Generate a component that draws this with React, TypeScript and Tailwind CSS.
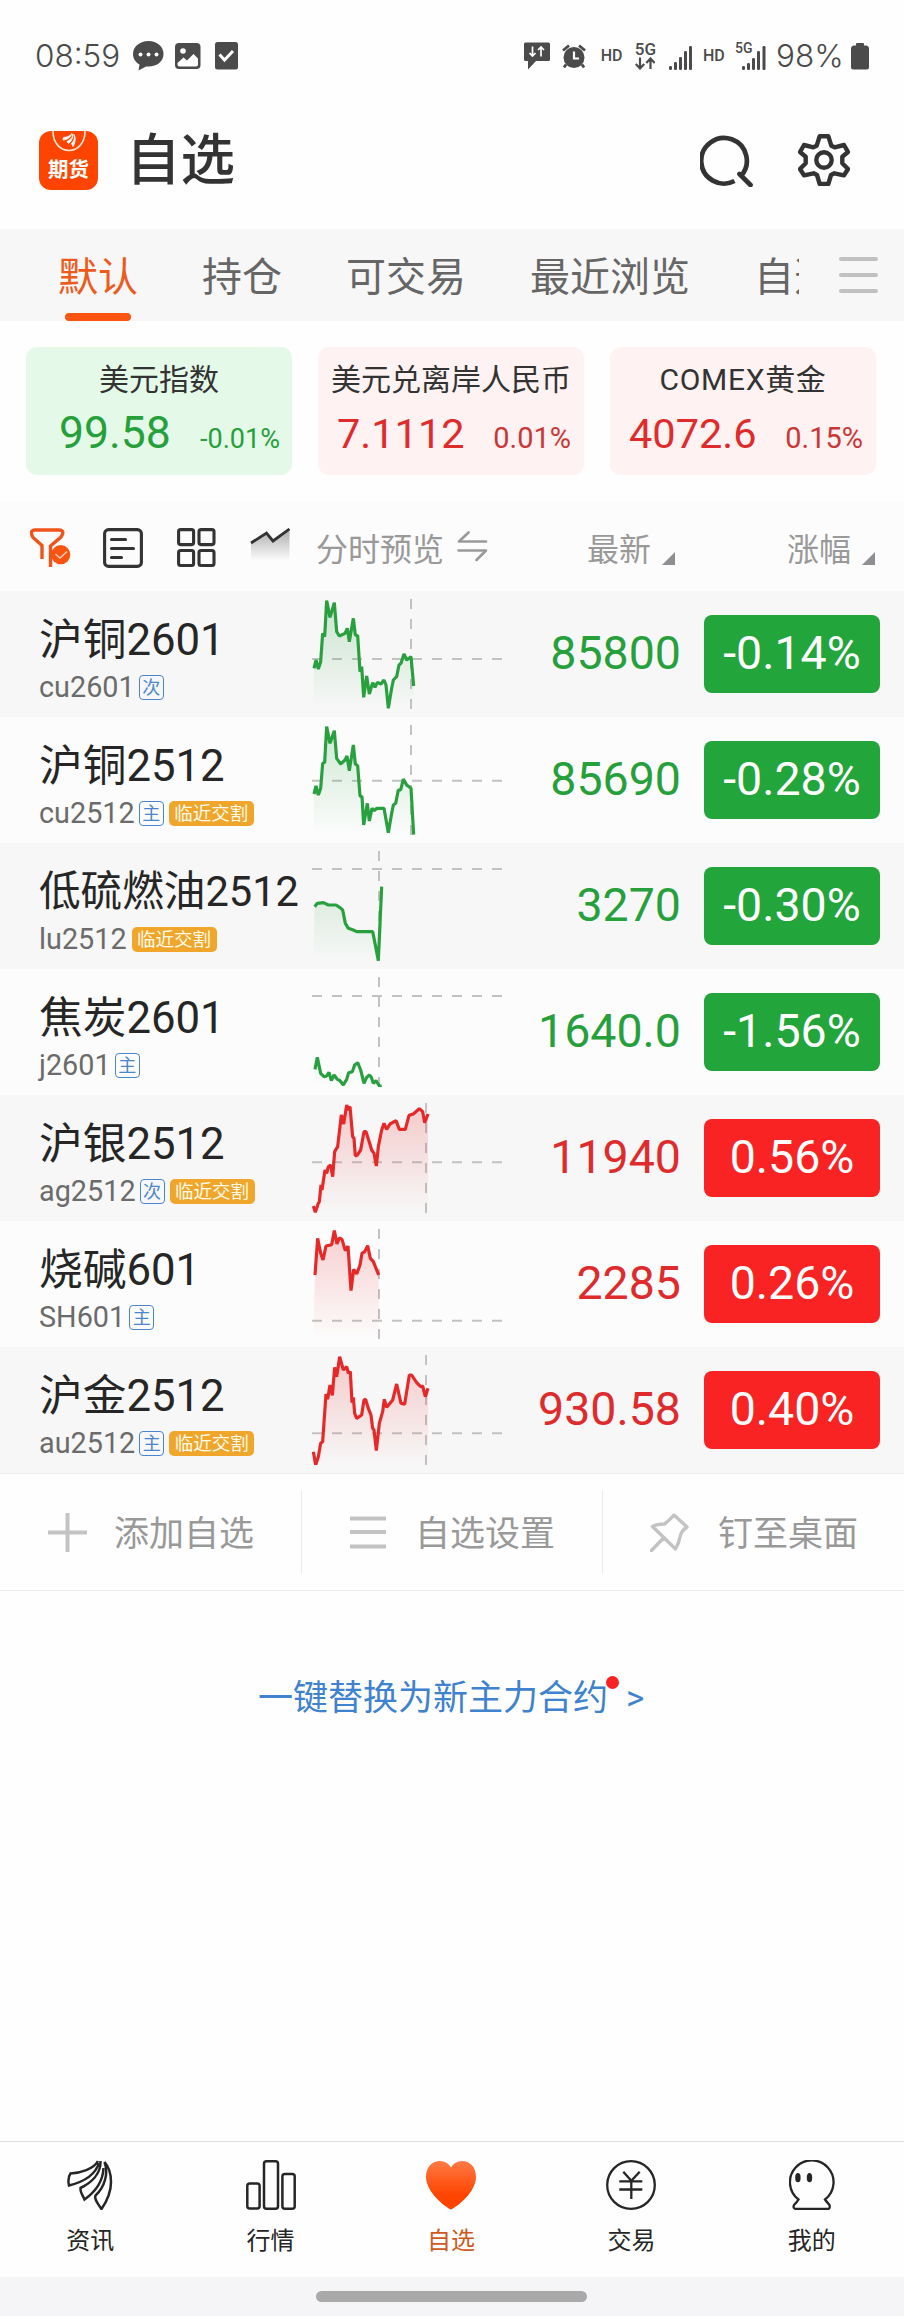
import React from 'react';

type Trend = 'up' | 'down';

interface Quote {
  name: string;
  code: string;
  tag?: string;
  expiring?: boolean;
  price: string;
  change: string;
  trend: Trend;
  baseY: number;
  nowX: number;
  points: string;
  tight?: boolean;
}

const QUOTES: Quote[] = [
  {
    name: '沪铜2601', code: 'cu2601', tag: '次', price: '85800', change: '-0.14%', trend: 'down', baseY: 180, nowX: 297,
    points: '6,208 12,183 19,210 26,188 32,103 38,113 44,5 54,55 67,11 74,98 82,111 99,103 106,88 112,128 124,58 130,108 137,110 144,218 149,203 155,295 164,231 172,285 182,251 189,265 196,250 207,255 216,243 222,258 229,328 239,268 244,243 254,233 261,198 267,193 276,165 284,183 297,173 305,261',
  },
  {
    name: '沪铜2512', code: 'cu2512', tag: '主', expiring: true, price: '85690', change: '-0.28%', trend: 'down', baseY: 167, nowX: 297,
    points: '6,207 12,183 19,210 26,190 32,115 38,112 44,5 54,55 67,17 74,100 86,117 99,105 105,93 112,137 124,60 130,117 137,122 144,213 150,215 155,300 166,235 172,288 180,250 187,257 194,250 216,250 229,323 239,265 244,240 251,235 259,195 266,195 274,162 284,180 297,190 305,329',
  },
  {
    name: '低硫燃油2512', code: 'lu2512', expiring: true, price: '3270', change: '-0.30%', trend: 'down', baseY: 54, nowX: 201, tight: true,
    points: '8,167 16,157 34,155 49,162 72,162 84,170 92,177 100,217 109,232 124,237 134,242 182,242 189,277 199,329 209,107',
  },
  {
    name: '焦炭2601', code: 'j2601', tag: '主', price: '1640.0', change: '-1.56%', trend: 'down', baseY: 57, nowX: 201,
    points: '9,277 16,241 26,289 36,299 44,297 51,286 58,311 66,294 76,307 84,311 94,324 104,307 110,287 121,284 128,264 137,257 146,279 156,319 164,301 172,294 178,301 184,319 192,311 202,327 209,327',
  },
  {
    name: '沪银2512', code: 'ag2512', tag: '次', expiring: true, price: '11940', change: '0.56%', trend: 'up', baseY: 178, nowX: 342,
    points: '4,309 10,328 19,301 22,296 27,246 30,261 39,201 44,211 49,191 56,186 62,221 68,146 77,131 88,36 95,63 104,6 108,21 114,11 122,101 126,106 130,159 136,156 146,141 156,86 162,86 170,111 179,141 186,151 193,189 199,131 209,81 216,61 224,79 234,63 252,53 262,79 280,79 291,37 304,33 322,17 332,26 338,59 348,33',
  },
  {
    name: '烧碱601', code: 'SH601', tag: '主', price: '2285', change: '0.26%', trend: 'up', baseY: 275, nowX: 201,
    points: '9,138 17,28 26,73 33,93 42,51 59,47 67,5 75,45 82,27 90,31 100,65 108,51 117,185 125,121 134,135 144,108 150,73 158,68 167,50 175,88 184,98 200,138',
  },
  {
    name: '沪金2512', code: 'au2512', tag: '主', expiring: true, price: '930.58', change: '0.40%', trend: 'up', baseY: 235, nowX: 342,
    points: '4,290 11,330 19,305 26,265 32,260 42,117 47,133 54,90 61,121 68,37 74,65 83,5 94,45 104,35 109,55 115,50 120,143 124,127 128,175 134,190 149,180 156,135 161,133 169,160 177,180 182,220 186,225 193,287 202,205 212,170 217,133 224,157 242,135 254,87 267,145 278,148 292,60 299,60 314,83 326,95 332,93 340,125 348,100',
  },
];

const SignalBars: React.FC<{ className?: string }> = ({ className }) => (
  <svg className={className} width="24" height="24" viewBox="0 0 24 24" fill="#4b4b4b">
    <rect x="0" y="20" width="3" height="4" rx="1.2" />
    <rect x="5" y="16" width="3" height="8" rx="1.2" />
    <rect x="10" y="11" width="3" height="13" rx="1.2" />
    <rect x="15" y="5" width="3" height="19" rx="1.2" />
    <rect x="20" y="0" width="3" height="24" rx="1.2" />
  </svg>
);

const StatusBar = () => (
  <div className="flex h-[112px] items-center pl-[35px] pr-[35px] text-[#4b4b4b]">
    <span className="w-[98px] font-['Inter',sans-serif] text-[31.5px] leading-none font-light">08:59</span>
    <svg width="31" height="30" viewBox="0 0 31 30">
      <path d="M15.5 0C7 0 0 5.5 0 13C0 18 3 21.5 6.500 23.5L5.500 29.500L13 25.500C23.500 26.500 30.500 20.500 30.500 13C30.500 5.500 24 0 15.500 0Z" fill="#4b4b4b" />
      <circle cx="7.5" cy="13.5" r="2" fill="#fff" />
      <circle cx="15.5" cy="13.5" r="2" fill="#fff" />
      <circle cx="23.5" cy="13.5" r="2" fill="#fff" />
    </svg>
    <svg className="ml-[11px]" width="26" height="26" viewBox="0 0 26 26">
      <rect width="25.5" height="26" rx="4" fill="#4b4b4b" />
      <circle cx="8" cy="8" r="2.8" fill="#fff" />
      <path d="M2.5 20L8.5 14.5L12 17.5L18.5 11L23 15.5V21.5Q23 23.5 21 23.5H4.5Q2.5 23.5 2.5 21.5Z" fill="#fff" />
    </svg>
    <svg className="ml-[14px]" width="23" height="28" viewBox="0 0 23 28">
      <rect width="23" height="27.5" rx="2.5" fill="#4b4b4b" />
      <path d="M4.5 12.5L9.5 18L18 9" fill="none" stroke="#fff" strokeWidth="3" />
    </svg>

    <svg className="ml-auto" width="26" height="28" viewBox="0 0 26 28">
      <path d="M1.5 0.5H24.5Q26 0.5 26 2V17.5Q26 19 24.5 19H12L4 27.5V19H1.5Q0 19 0 17.5V2Q0 0.5 1.5 0.5Z" fill="#4b4b4b" />
      <path d="M8.5 4.5V14M5.5 11l3 3 3-3M17 14.5V5M14 8l3-3 3 3" fill="none" stroke="#fff" strokeWidth="1.7" />
    </svg>
    <svg className="ml-[12px]" width="24" height="25" viewBox="0 0 24 25">
      <path d="M1 6.5L7 1.5M23 6.5L17 1.5M4 20.5L2 23.5M20 20.5L22 23.5" stroke="#4b4b4b" strokeWidth="2.8" />
      <circle cx="12" cy="13.5" r="10.5" fill="#4b4b4b" />
      <path d="M12 7.5V14.5H17" fill="none" stroke="#fff" strokeWidth="2.2" />
    </svg>
    <span className="ml-[15px] w-[22px] text-[16px] leading-none font-medium">HD</span>
    <div className="ml-[12px] flex flex-col items-center">
      <span className="text-[17px] leading-[14px] font-medium">5G</span>
      <svg className="mt-px" width="20" height="13" viewBox="0 0 20 13" fill="none" stroke="#4b4b4b" strokeWidth="2.2">
        <path d="M5 0.5V11M0.8 7l4.2 4.5L9.2 7M15.5 12V1.500M11.300 6l4.200-4.500L19.700 6" />
      </svg>
    </div>
    <SignalBars className="ml-[13px] mt-[3px]" />
    <span className="ml-[10px] w-[22px] text-[16px] leading-none font-medium">HD</span>
    <div className="relative ml-[10px] h-[28px] w-[31px]">
      <span className="absolute left-0 top-0 text-[14px] leading-[12px] font-medium">5G</span>
      <svg className="absolute bottom-0 right-0" width="24" height="24" viewBox="0 0 24 24" fill="#4b4b4b">
        <rect x="0" y="20" width="3" height="4" rx="1.2" />
        <rect x="5" y="17" width="3" height="7" rx="1.2" />
        <rect x="10" y="12" width="3" height="12" rx="1.2" />
        <rect x="15" y="5" width="3" height="19" rx="1.2" />
        <rect x="20.5" y="0" width="3" height="24" rx="1.2" />
      </svg>
    </div>
    <span className="ml-[10px] w-[70px] font-['Inter',sans-serif] text-[31.5px] leading-none font-light">98%</span>
    <svg className="ml-[5px]" width="18" height="27" viewBox="0 0 18 27" fill="#4b4b4b">
      <path d="M5 1Q5 0 6 0H12Q13 0 13 1V2.5H15.5Q18 3 18 5.5V24Q18 26.5 15.5 26.5H2.5Q0 26.5 0 24V5.5Q0 3 2.5 2.5H5Z" />
    </svg>
  </div>
);

const AppHeader = () => (
  <header className="flex h-[117px] items-start pl-[39px] pr-[54px]">
    <div className="relative mt-[19px] flex h-[59px] w-[59px] justify-center overflow-hidden rounded-[12px] bg-[#ff4400]">
      <svg className="absolute left-0 top-0" width="60" height="24" viewBox="0 0 60 24" fill="none">
        <path d="M14 0C14 26 46 26 46 0" stroke="#ffe9d9" strokeWidth="1.6" />
        <path d="M33 2.5C31 5 27 6.5 24.5 6.5L24 9C28 9 32 6 33 2.5ZM34 3C33.5 7 31 9 28 10.5L29.5 12.5C32.5 10.5 34 7 34 3ZM35 3.5C36 7 35 10 32.5 12.5L34 15.5C36.5 11.5 37 7 35 3.5Z" fill="#fff" stroke="#fff" strokeWidth="0.8" />
      </svg>
      <span className="mt-[29px] text-[20.5px] leading-none font-bold text-white">期货</span>
    </div>
    <h1 className="ml-[28px] mt-[21px] text-[54.5px] leading-none font-medium text-[#333]">自选</h1>
    <svg className="ml-auto mt-[22px]" width="53" height="53" viewBox="0 0 53 53" fill="none" stroke="#333" strokeWidth="4.7">
      <path d="M34.5 47A22.8 22.8 0 1 1 40.5 42.5" />
      <path d="M39.5 40L50.5 51" strokeLinecap="round" />
    </svg>
    <svg className="ml-[45px] mt-[22px]" width="52" height="52" viewBox="0 0 52 52" fill="none" stroke="#333" strokeWidth="4.4" strokeLinejoin="round">
      <path d="M21.7 2.2H30.3L33.3 11.7L36.7 13.3L46 11L50 18L44.3 22.7V29.3L50 35L46 41.3L36.4 39.3L33 41L30.3 50H21.7L19 41L15.6 39.3L6 41.3L2 35L7.7 29.3V22.7L2 18L6 11L15.3 13.3L18.7 11.7Z" />
      <circle cx="26" cy="26" r="7.7" />
    </svg>
  </header>
);

const TABS = ['持仓', '可交易', '最近浏览', '自选'];

const TabBar = () => (
  <nav className="flex h-[92px] bg-[#f7f7f7] text-[40px] leading-none text-[#666]">
    <div className="flex w-[799px] gap-[64px] overflow-hidden whitespace-nowrap pl-[58px] pt-[29px]">
      <div className="flex shrink-0 flex-col items-center text-[#ee5a1c]">
        默认
        <div className="mt-[15px] h-[8px] w-[66px] rounded-full bg-[#fb5310]" />
      </div>
      {TABS.map((tab) => (
        <div key={tab} className="shrink-0">{tab}</div>
      ))}
    </div>
    <div className="ml-[40px] mt-[28px] flex h-[36px] w-[39px] flex-col justify-between">
      <div className="h-[4px] rounded-full bg-[#c1c1c1]" />
      <div className="h-[4px] rounded-full bg-[#c1c1c1]" />
      <div className="h-[4px] rounded-full bg-[#c1c1c1]" />
    </div>
  </nav>
);

const IndexCards = () => (
  <section className="flex h-[181px] gap-[26px] px-[26px] pt-[26px]">
    <div className="h-[128px] w-[266px] rounded-[11px] bg-[#e4f9e8] pt-[18px]">
      <div className="text-center text-[30px] leading-none text-[#333]">美元指数</div>
      <div className="mt-[16px] flex items-baseline justify-between pl-[33px] pr-[12px] text-[#25a03b]">
        <span className="text-[44.5px] leading-none">99.58</span>
        <span className="text-[27px] leading-none">-0.01%</span>
      </div>
    </div>
    <div className="h-[128px] w-[266px] rounded-[11px] bg-[#fff2f2] pt-[18px]">
      <div className="text-center text-[30px] leading-none text-[#333]">美元兑离岸人民币</div>
      <div className="mt-[18px] flex items-baseline justify-between pl-[19px] pr-[13px] text-[#df2b2b]">
        <span className="text-[41.5px] leading-none">7.1112</span>
        <span className="text-[29px] leading-none text-[#cb3636]">0.01%</span>
      </div>
    </div>
    <div className="h-[128px] w-[266px] rounded-[11px] bg-[#fff2f2] pt-[18px]">
      <div className="text-center text-[30px] leading-none tracking-[0.7px] text-[#333]">COMEX黄金</div>
      <div className="mt-[18px] flex items-baseline justify-between pl-[19px] pr-[13px] text-[#df2b2b]">
        <span className="text-[41.5px] leading-none">4072.6</span>
        <span className="text-[29px] leading-none text-[#cb3636]">0.15%</span>
      </div>
    </div>
  </section>
);

const SortMark = () => (
  <svg className="ml-[11px] mt-[24px]" width="13" height="13" viewBox="0 0 13 13">
    <path d="M13 0V13H0Z" fill="#8e8e93" />
  </svg>
);

const TableHeader = () => (
  <div className="flex h-[89px] items-center bg-[#fcfcfc] pl-[30px] pr-[29px] text-[32px] leading-none text-[#999]">
    <svg className="mt-[3px]" width="41" height="40" viewBox="0 0 41 40" fill="none">
      <path d="M12 31V17.5L3 9.500Q-1 2.500 5 2H29Q35.500 2.500 31 9L20.500 18V39" stroke="#f0541a" strokeWidth="3.4" />
      <circle cx="30.7" cy="26.7" r="9.6" fill="#fb5310" />
      <path d="M25.5 26L30 30L37 23.5" stroke="#ffd9c8" strokeWidth="1.3" />
    </svg>
    <svg className="ml-[32px] mt-[3px]" width="40" height="40" viewBox="0 0 40 40" fill="none" stroke="#333" strokeWidth="3.1">
      <rect x="1.6" y="1.6" width="36.800" height="36.800" rx="4" />
      <path d="M8.5 11.5H22.5M8.5 20.5H30.5M8.5 29.5H18.5" strokeLinecap="round" />
    </svg>
    <svg className="ml-[34px] mt-[3px]" width="39" height="40" viewBox="0 0 39 40" fill="none" stroke="#333" strokeWidth="3.1">
      <rect x="1.6" y="1.6" width="15" height="15" rx="2" />
      <rect x="22" y="1.6" width="15" height="15" rx="2" />
      <rect x="1.6" y="22.5" width="15" height="15" rx="2" />
      <rect x="22" y="22.5" width="15" height="15" rx="2" />
    </svg>
    <svg className="ml-[34px] mt-[3px]" width="40" height="40" viewBox="0 0 40 40" fill="none">
      <defs>
        <linearGradient id="previewFade" x1="0" y1="0" x2="0" y2="1">
          <stop offset="0" stopColor="#333" stopOpacity="0.4" />
          <stop offset="0.85" stopColor="#333" stopOpacity="0" />
        </linearGradient>
      </defs>
      <path d="M1 15L16.5 5L23 13L39.5 1V38H1Z" fill="url(#previewFade)" />
      <path d="M1 15L16.5 5L23 13L39.5 1" stroke="#333" strokeWidth="2.8" />
    </svg>
    <span className="ml-[26px] mt-[6px] w-[128px]">分时预览</span>
    <svg className="ml-[13px] mb-[1px]" width="31" height="31" viewBox="0 0 31 31" fill="none" stroke="#999" strokeWidth="2.6" strokeLinecap="round" strokeLinejoin="round">
      <path d="M29 10.5H2L11.500 1.500M1.500 19.500H29L19.500 29" />
    </svg>
    <span className="ml-[99px] mt-[6px] w-[64px]">最新</span>
    <SortMark />
    <span className="ml-auto mt-[6px]">涨幅</span>
    <SortMark />
  </div>
);

const MiniChart: React.FC<{ quote: Quote; id: string }> = ({ quote, id }) => {
  const color = quote.trend === 'up' ? '#e82828' : '#27a03d';
  const pts = quote.points.split(' ');
  const lastX = pts[pts.length - 1].split(',')[0];

  return (
    <svg width="190" height="110" viewBox="0 0 570 330" fill="none" className="shrink-0">
      <defs>
        <linearGradient id={id} gradientUnits="userSpaceOnUse" x1="0" y1="0" x2="0" y2="330">
          <stop offset="0" stopColor={color} stopOpacity="0.22" />
          <stop offset="1" stopColor={color} stopOpacity="0" />
        </linearGradient>
      </defs>
      <path d={`M0 ${quote.baseY}H570M${quote.nowX} 0V330`} stroke="#c2c2c2" strokeWidth="6" strokeDasharray="30 30" />
      <polygon points={`3,330 ${quote.points} ${lastX},330`} fill={`url(#${id})`} />
      <polyline points={quote.points} stroke={color} strokeWidth="9.5" strokeLinejoin="bevel" />
    </svg>
  );
};

const QuoteRow: React.FC<{ quote: Quote; index: number }> = ({ quote, index }) => (
  <div className={`flex h-[126px] ${index % 2 === 0 ? 'bg-[#f7f7f7]' : 'bg-[#fcfcfc]'}`}>
    <div className="w-[312px] shrink-0 whitespace-nowrap pl-[39px] pt-[27px]">
      <div className={`h-[44px] leading-[44px] text-[#262626] ${quote.tight ? 'text-[41.6px]' : 'text-[43.7px]'}`}>{quote.name}</div>
      <div className="mt-[13px] flex h-[25px] items-center text-[28.8px] leading-none text-[#6b6b6b]">
        {quote.code}
        {quote.tag && (
          <span className="ml-[4px] flex h-[25px] w-[25px] items-center justify-center rounded-[4px] border border-[#4a86d0] pt-px text-[18px] leading-none text-[#4a86d0]">
            {quote.tag}
          </span>
        )}
        {quote.expiring && (
          <span className="ml-[5px] flex h-[25px] w-[85px] items-center justify-center rounded-[5px] bg-[#f0a62b] pt-px text-[18.5px] leading-none text-[#fffbea]">
            临近交割
          </span>
        )}
      </div>
    </div>
    <div className="pt-[8px]">
      <MiniChart quote={quote} id={`fade-${quote.code}`} />
    </div>
    <div className={`flex w-[179px] items-center justify-end pb-[2px] text-[46.5px] leading-none ${quote.trend === 'up' ? 'text-[#df2b2b]' : 'text-[#25a03b]'}`}>
      {quote.price}
    </div>
    <div className={`ml-[23px] mt-[24px] flex h-[78px] w-[176px] items-center justify-center rounded-[8px] pb-[2px] text-[46.5px] leading-none text-white ${quote.trend === 'up' ? 'bg-[#f92323]' : 'bg-[#22a53a]'}`}>
      {quote.change}
    </div>
  </div>
);

const ActionBar = () => (
  <div className="flex h-[118px] items-center border-y border-[#ebebeb] text-[35px] leading-none text-[#999]">
    <div className="flex h-[82px] w-[302px] items-center border-r border-[#ebebeb] pl-[48px]">
      <svg width="39" height="39" viewBox="0 0 39 39" stroke="#c3c3c3" strokeWidth="4">
        <path d="M0 19.5H39M19.5 0V39" />
      </svg>
      <span className="ml-[27px] mt-[5px]">添加自选</span>
    </div>
    <div className="flex h-[82px] w-[301px] items-center border-r border-[#ebebeb] pl-[48px]">
      <svg width="36" height="33" viewBox="0 0 36 33" stroke="#c3c3c3" strokeWidth="4">
        <path d="M0 2.5H36M0 16H36M0 30.5H36" />
      </svg>
      <span className="ml-[29px] mt-[5px]">自选设置</span>
    </div>
    <div className="flex h-[82px] items-center pl-[47px]">
      <svg width="39" height="39" viewBox="0 0 39 39" fill="none" stroke="#c3c3c3" strokeWidth="3.4">
        <path d="M24 2L37 14Q31 18 30 24Q29 30 25.5 36L2.5 13.5Q7 11 14.5 11Q19 8 24 2ZM14 24.5L1.500 37.500" strokeLinejoin="round" strokeLinecap="round" />
      </svg>
      <span className="ml-[29px] mt-[5px]">钉至桌面</span>
    </div>
  </div>
);

const NAV_ITEMS = [
  {
    label: '资讯',
    icon: (
      <svg width="46" height="50" viewBox="0 0 46 50" fill="none" stroke="#262626" strokeWidth="2.5">
        <path d="M31 1C27 9 13 13 3.5 13.5C1 17 1 21 2 25.5C16 22 28 16 32 3" />
        <path d="M33.5 1C34 14 24 23 13.5 28C13 32 15.5 35 17.5 39.5C28 32 36 22 36.5 8" />
        <path d="M37.5 2C42 14 37 28 28.5 35.5C27 39 31 44 34.5 49C40 41 44 33 44 22C44 13 42 7 37.5 2Z" />
      </svg>
    ),
  },
  {
    label: '行情',
    icon: (
      <svg width="50" height="50" viewBox="0 0 50 50" fill="none" stroke="#262626" strokeWidth="2.5">
        <rect x="1.3" y="23.5" width="12.3" height="25" rx="2.5" />
        <rect x="18" y="1.3" width="14" height="47.4" rx="2.5" />
        <rect x="36.4" y="14" width="12.3" height="34.7" rx="2.5" />
      </svg>
    ),
  },
  {
    label: '自选',
    active: true,
    icon: (
      <svg width="50" height="50" viewBox="0 0 50 50">
        <defs>
          <linearGradient id="heartFill" x1="0" y1="0" x2="0" y2="1">
            <stop offset="0" stopColor="#ff7a45" />
            <stop offset="0.7" stopColor="#ff4400" />
          </linearGradient>
        </defs>
        <path d="M25 49.5C19 47 0 32 0 17C0 7 6 1 14 1C19 1 23 4 25 7.5C27 4 31 1 36 1C44 1 50 7 50 17C50 32 31 47 25 49.5Z" fill="url(#heartFill)" />
      </svg>
    ),
  },
  {
    label: '交易',
    icon: (
      <svg width="50" height="50" viewBox="0 0 50 50" fill="none" stroke="#262626" strokeWidth="2.3">
        <circle cx="25" cy="25" r="23.8" />
        <path d="M17.3 11.7L25.3 20.7L33.7 11.7M13.3 21.3H36.3M13.3 29.5H36.3M25.3 20.7V39" />
      </svg>
    ),
  },
  {
    label: '我的',
    icon: (
      <svg width="46" height="50" viewBox="0 0 46 50" fill="none" stroke="#262626" strokeWidth="2.3">
        <path d="M9.5 39.5A21.8 21.8 0 1 1 36 39.5Q37 41 40.5 45Q41.5 49 38.5 49H7Q3.5 48.5 5 45Q8.5 41.5 9.5 39.5Z" />
        <ellipse cx="8.9" cy="17.7" rx="2.7" ry="4.6" fill="#262626" stroke="none" />
        <ellipse cx="20.5" cy="17.7" rx="2.7" ry="4.6" fill="#262626" stroke="none" />
      </svg>
    ),
  },
];

const BottomNav = () => (
  <nav className="grid h-[136px] grid-cols-5 border-t border-[#dedede] pr-[2px]">
    {NAV_ITEMS.map((item) => (
      <div
        key={item.label}
        className={`flex flex-col items-center pt-[18px] text-[24px] leading-none ${item.active ? 'text-[#cf5a1e]' : 'text-[#262626]'}`}
      >
        {item.icon}
        <span className="mt-[19px]">{item.label}</span>
      </div>
    ))}
  </nav>
);

export default function App() {
  return (
    <div className="flex h-[2316px] w-[904px] flex-col overflow-hidden bg-[#fefefe] font-['Roboto','Noto_Sans_CJK_SC',sans-serif]">
      <StatusBar />
      <AppHeader />
      <TabBar />
      <IndexCards />
      <TableHeader />
      <main>
        {QUOTES.map((quote, i) => (
          <QuoteRow key={quote.code} quote={quote} index={i} />
        ))}
      </main>
      <ActionBar />
      <div className="mt-[90px] flex pl-[258px] text-[35px] leading-none text-[#3f82d0]">
        <span className="relative">
          一键替换为新主力合约
          <span className="absolute -right-[11px] -top-[5px] h-[13px] w-[13px] rounded-full bg-[#f92323]" />
        </span>
        <span className="ml-[18px]">&gt;</span>
      </div>
      <div className="mt-auto">
        <BottomNav />
        <div className="flex h-[39px] justify-center bg-[#f5f5f8] pt-[14px] pr-[1px]">
          <div className="h-[11px] w-[271px] rounded-full bg-[#a9a9a9]" />
        </div>
      </div>
    </div>
  );
}
